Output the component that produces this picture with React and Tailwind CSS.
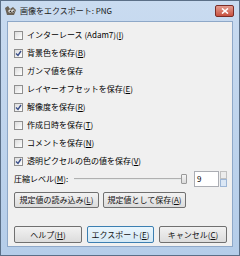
import React from 'react';

const options = [
  { label: 'インターレース (Adam7)', key: 'I', checked: false },
  { label: '背景色を保存', key: 'B', checked: true },
  { label: 'ガンマ値を保存', key: null, checked: false },
  { label: 'レイヤーオフセットを保存', key: 'E', checked: false },
  { label: '解像度を保存', key: 'R', checked: true },
  { label: '作成日時を保存', key: 'T', checked: false },
  { label: 'コメントを保存', key: 'N', checked: false },
  { label: '透明ピクセルの色の値を保存', key: 'V', checked: true },
];

const Mnemonic = ({ k }) => (
  <>
    (<span className="underline">{k}</span>)
  </>
);

const CheckBox = ({ checked }) => (
  <div className="w-[9px] h-[9px] border border-[#8f8f8f] bg-gradient-to-br from-[#dcdcdc] to-white flex items-center justify-center">
    {checked && (
      <svg width="7" height="7" viewBox="0 0 7 7">
        <path d="M1 3.5 L3 5.5 L6 1" stroke="#3a4f8a" strokeWidth="1.4" fill="none" />
      </svg>
    )}
  </div>
);

const Button = ({ children, width, primary }) => (
  <button
    className={
      primary
        ? `${width} h-full rounded-[2px] border border-[#3c7fb1] bg-gradient-to-b from-[#eaf6fd] to-[#d5e9f5] flex items-center justify-center text-[#111]`
        : `${width} h-full rounded-[2px] border border-[#707070] bg-gradient-to-b from-[#f2f2f2] to-[#dcdcdc] flex items-center justify-center text-[#111]`
    }
  >
    {children}
  </button>
);

export default function App() {
  return (
    <div
      className="w-[240px] h-[256px] bg-gradient-to-b from-[#c9dbf0] to-[#b5cde9] border border-[#5b6f87] flex flex-col text-[8px] leading-none text-black"
      style={{ fontFamily: '"Noto Sans CJK JP", "Liberation Sans", sans-serif' }}
    >
      {/* title bar */}
      <div className="h-[20px] flex items-center pl-[3px] pr-[5px]">
        <svg width="13" height="12" viewBox="0 0 13 12" className="mr-[3px]">
          <path d="M1 3 L4 1 L6 4 L9 2 L12 5 L10 10 L3 10 Z" fill="#6b6357" />
          <circle cx="6" cy="6" r="1.6" fill="#fff" />
          <circle cx="6.3" cy="6.2" r="0.8" fill="#000" />
          <circle cx="9" cy="6" r="1.4" fill="#fff" />
          <circle cx="9.2" cy="6.2" r="0.7" fill="#000" />
        </svg>
        <span className="text-[8px] text-[#1b1b1b]">画像をエクスポート: PNG</span>
        <div className="ml-auto w-[19px] h-[12px] rounded-[2px] border border-[#7a2d27] bg-gradient-to-b from-[#e39b8f] to-[#c7503f] flex items-center justify-center">
          <svg width="8" height="6" viewBox="0 0 8 6">
            <path d="M1 0.5 L7 5.5 M7 0.5 L1 5.5" stroke="#fff" strokeWidth="1.6" />
          </svg>
        </div>
      </div>

      {/* client area */}
      <div className="mx-[6px] h-[226px] bg-[#f0f0f0] border border-[#8ea8c8] flex flex-col pt-[4px] pl-[6px] pr-[5px]">
        {options.map((o) => (
          <div key={o.label} className="h-[18px] flex items-center">
            <CheckBox checked={o.checked} />
            <span className="ml-[4px]">
              {o.label}
              {o.key && <Mnemonic k={o.key} />}
            </span>
          </div>
        ))}

        <div className="h-[18px] flex items-center">
          <span>
            圧縮レベル(<span className="underline">M</span>):
          </span>
          <div className="flex-1 ml-[6px] relative h-full flex items-center">
            <div className="w-full h-[2px] border-t border-[#b0b0b0] bg-[#e7eaea]" />
            <div className="absolute right-[0px] top-[4px] w-[6px] h-[10px] border border-[#9a9a9a] rounded-[1px] bg-gradient-to-b from-[#f5f5f5] to-[#dadada]" />
          </div>
          <div className="ml-[7px] w-[25px] h-[16px] bg-white border border-[#abadb3] flex items-center pl-[2px]">
            9
          </div>
          <div className="ml-[1px] w-[7px] h-[16px] flex flex-col">
            <div className="flex-1 border border-[#c0c0c0] bg-[#ececec]" />
            <div className="flex-1 border border-[#9db6d6] bg-[#dbe7f5]" />
          </div>
        </div>

        <div className="mt-[4px] h-[16px] flex gap-[4px]">
          <Button width="w-[85px]">
            規定値の読み込み(<span className="underline">L</span>)
          </Button>
          <Button width="w-[83px]">
            規定値として保存(<span className="underline">A</span>)
          </Button>
        </div>

        <div className="mt-[18px] h-[17px] flex gap-[5px]">
          <Button width="w-[68px]">
            ヘルプ(<span className="underline">H</span>)
          </Button>
          <Button width="w-[67px]" primary>
            エクスポート(<span className="underline">E</span>)
          </Button>
          <Button width="w-[68px]">
            キャンセル(<span className="underline">C</span>)
          </Button>
        </div>
      </div>
    </div>
  );
}
